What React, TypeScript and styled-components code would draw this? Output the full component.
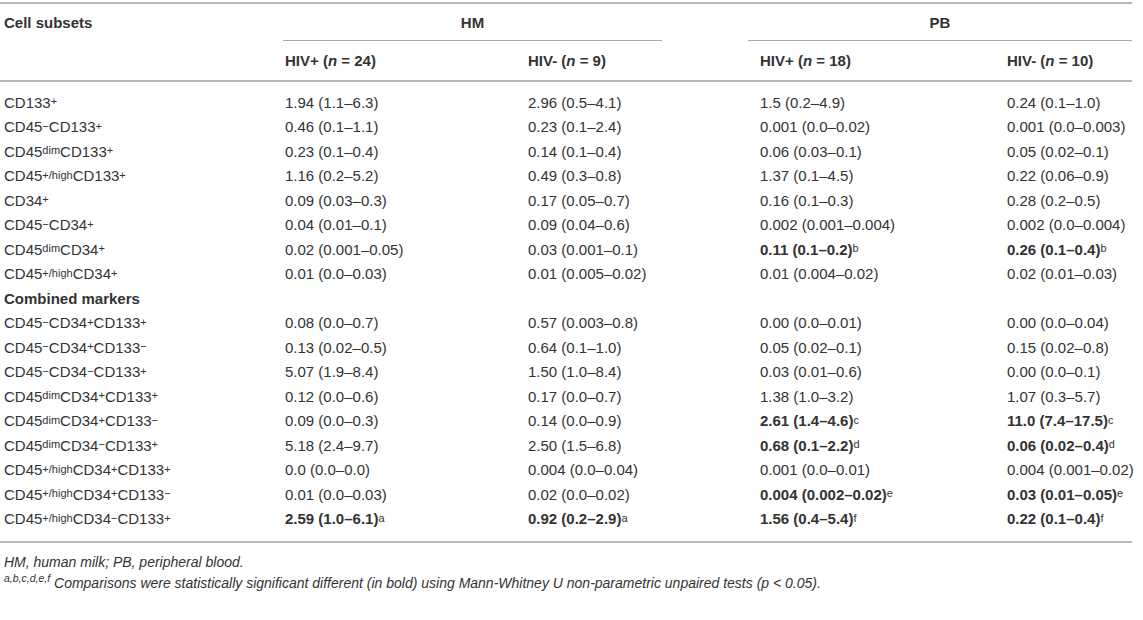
import React from "react";
import styled, { createGlobalStyle } from "styled-components";

const Global = createGlobalStyle`
  html, body { margin: 0; padding: 0; background: #fff; }
  body { font-family: "Liberation Sans", Arial, Helvetica, sans-serif; color: #333; }
`;

const Page = styled.div`
  width: 1143px;
  padding-top: 2px;
`;

const Table = styled.div`
  width: 1132px;
  display: grid;
  grid-template-columns: 283px 245px 232px 247px 125px;
  border-top: 2px solid #b8b8b8;
  font-size: 15px;
`;

const GroupLabel = styled.div<{ $span: number; $ml: number; $mr: number; $center?: boolean }>`
  grid-column: span ${(p) => p.$span};
  height: 36px;
  display: flex;
  align-items: center;
  justify-content: ${(p) => (p.$center ? "center" : "flex-start")};
  margin-left: ${(p) => p.$ml}px;
  margin-right: ${(p) => p.$mr}px;
  padding-left: ${(p) => (p.$center ? 0 : 4)}px;
  font-weight: bold;
  border-bottom: ${(p) => (p.$center ? "1px solid #aaa" : "1px solid transparent")};
`;

const SubHead = styled.div<{ $pl?: number }>`
  height: 39px;
  display: flex;
  align-items: center;
  padding-left: ${(p) => p.$pl ?? 0}px;
  font-weight: bold;
  white-space: nowrap;
  border-bottom: 2px solid #b8b8b8;
`;

const Body = styled.div`
  grid-column: 1 / -1;
  display: grid;
  grid-template-columns: 283px 245px 232px 247px 125px;
  grid-auto-rows: 24.5px;
  padding: 8px 0 10px;
  border-bottom: 2px solid #b8b8b8;
`;

const Cell = styled.div<{ $pl?: number; $bold?: boolean }>`
  display: flex;
  align-items: center;
  white-space: nowrap;
  padding-left: ${(p) => p.$pl ?? 0}px;
  font-weight: ${(p) => (p.$bold ? "bold" : "normal")};
`;

const Sup = styled.sup`
  font-size: 11px;
  line-height: 0;
  position: relative;
  top: -1px;
  vertical-align: super;
  font-weight: normal;
`;

const Notes = styled.div`
  padding: 9px 0 0 4px;
  font-size: 14px;
  font-style: italic;
  line-height: 21px;
`;

const NoteSup = styled.sup`
  font-size: 10.5px;
  line-height: 0;
`;

type Seg = [string, "n" | "p" | "m" | "s"];

const Label = ({ segs }: { segs: Seg[] }) => (
  <>
    {segs.map(([t, k], i) =>
      k === "n" ? <React.Fragment key={i}>{t}</React.Fragment> : <Sup key={i}>{k === "p" ? "+" : k === "m" ? "−" : t}</Sup>
    )}
  </>
);

const parse = (s: string): Seg[] => {
  const out: Seg[] = [];
  const re = /\{([^}]*)\}/g;
  let last = 0;
  let m: RegExpExecArray | null;
  while ((m = re.exec(s))) {
    if (m.index > last) out.push([s.slice(last, m.index), "n"]);
    const v = m[1];
    out.push([v, v === "+" ? "p" : v === "-" ? "m" : "s"]);
    last = re.lastIndex;
  }
  if (last < s.length) out.push([s.slice(last), "n"]);
  return out;
};

type Val = string | [string, string];
type Row = { label: string; vals: Val[]; section?: boolean };

const rows: Row[] = [
  { label: "CD133{+}", vals: ["1.94 (1.1–6.3)", "2.96 (0.5–4.1)", "1.5 (0.2–4.9)", "0.24 (0.1–1.0)"] },
  { label: "CD45{-}CD133{+}", vals: ["0.46 (0.1–1.1)", "0.23 (0.1–2.4)", "0.001 (0.0–0.02)", "0.001 (0.0–0.003)"] },
  { label: "CD45{dim}CD133{+}", vals: ["0.23 (0.1–0.4)", "0.14 (0.1–0.4)", "0.06 (0.03–0.1)", "0.05 (0.02–0.1)"] },
  { label: "CD45{+/high}CD133{+}", vals: ["1.16 (0.2–5.2)", "0.49 (0.3–0.8)", "1.37 (0.1–4.5)", "0.22 (0.06–0.9)"] },
  { label: "CD34{+}", vals: ["0.09 (0.03–0.3)", "0.17 (0.05–0.7)", "0.16 (0.1–0.3)", "0.28 (0.2–0.5)"] },
  { label: "CD45{-}CD34{+}", vals: ["0.04 (0.01–0.1)", "0.09 (0.04–0.6)", "0.002 (0.001–0.004)", "0.002 (0.0–0.004)"] },
  { label: "CD45{dim}CD34{+}", vals: ["0.02 (0.001–0.05)", "0.03 (0.001–0.1)", ["0.11 (0.1–0.2)", "b"], ["0.26 (0.1–0.4)", "b"]] },
  { label: "CD45{+/high}CD34{+}", vals: ["0.01 (0.0–0.03)", "0.01 (0.005–0.02)", "0.01 (0.004–0.02)", "0.02 (0.01–0.03)"] },
  { label: "Combined markers", vals: [], section: true },
  { label: "CD45{-}CD34{+}CD133{+}", vals: ["0.08 (0.0–0.7)", "0.57 (0.003–0.8)", "0.00 (0.0–0.01)", "0.00 (0.0–0.04)"] },
  { label: "CD45{-}CD34{+}CD133{-}", vals: ["0.13 (0.02–0.5)", "0.64 (0.1–1.0)", "0.05 (0.02–0.1)", "0.15 (0.02–0.8)"] },
  { label: "CD45{-}CD34{-}CD133{+}", vals: ["5.07 (1.9–8.4)", "1.50 (1.0–8.4)", "0.03 (0.01–0.6)", "0.00 (0.0–0.1)"] },
  { label: "CD45{dim}CD34{+}CD133{+}", vals: ["0.12 (0.0–0.6)", "0.17 (0.0–0.7)", "1.38 (1.0–3.2)", "1.07 (0.3–5.7)"] },
  { label: "CD45{dim}CD34{+}CD133{-}", vals: ["0.09 (0.0–0.3)", "0.14 (0.0–0.9)", ["2.61 (1.4–4.6)", "c"], ["11.0 (7.4–17.5)", "c"]] },
  { label: "CD45{dim}CD34{-}CD133{+}", vals: ["5.18 (2.4–9.7)", "2.50 (1.5–6.8)", ["0.68 (0.1–2.2)", "d"], ["0.06 (0.02–0.4)", "d"]] },
  { label: "CD45{+/high}CD34{+}CD133{+}", vals: ["0.0 (0.0–0.0)", "0.004 (0.0–0.04)", "0.001 (0.0–0.01)", "0.004 (0.001–0.02)"] },
  { label: "CD45{+/high}CD34{+}CD133{-}", vals: ["0.01 (0.0–0.03)", "0.02 (0.0–0.02)", ["0.004 (0.002–0.02)", "e"], ["0.03 (0.01–0.05)", "e"]] },
  { label: "CD45{+/high}CD34{-}CD133{+}", vals: [["2.59 (1.0–6.1)", "a"], ["0.92 (0.2–2.9)", "a"], ["1.56 (0.4–5.4)", "f"], ["0.22 (0.1–0.4)", "f"]] },
];

const colPad = [4, 2, 0, 0, 0];

export default function App() {
  return (
    <Page>
      <Global />
      <Table>
        <GroupLabel $span={1} $ml={0} $mr={0}>Cell subsets</GroupLabel>
        <GroupLabel $span={2} $ml={0} $mr={98} $center>HM</GroupLabel>
        <GroupLabel $span={2} $ml={-12} $mr={0} $center>PB</GroupLabel>
        <SubHead />
        <SubHead $pl={colPad[1]}>HIV+ (<i>n</i>&nbsp;=&nbsp;24)</SubHead>
        <SubHead>HIV- (<i>n</i>&nbsp;=&nbsp;9)</SubHead>
        <SubHead>HIV+ (<i>n</i>&nbsp;=&nbsp;18)</SubHead>
        <SubHead>HIV- (<i>n</i>&nbsp;=&nbsp;10)</SubHead>
        <Body>
          {rows.map((r, ri) => (
            <React.Fragment key={ri}>
              <Cell $pl={colPad[0]} $bold={r.section}>
                {r.section ? r.label : <Label segs={parse(r.label)} />}
              </Cell>
              {[0, 1, 2, 3].map((ci) => {
                const v = r.vals[ci];
                if (v === undefined) return <Cell key={ci} />;
                if (typeof v === "string") return <Cell key={ci} $pl={colPad[ci + 1]}>{v}</Cell>;
                return (
                  <Cell key={ci} $pl={colPad[ci + 1]} $bold>
                    {v[0]}
                    <Sup>{v[1]}</Sup>
                  </Cell>
                );
              })}
            </React.Fragment>
          ))}
        </Body>
      </Table>
      <Notes>
        <div>HM, human milk; PB, peripheral blood.</div>
        <div>
          <NoteSup>a,b,c,d,e,f</NoteSup> Comparisons were statistically significant different (in bold) using Mann-Whitney U non-parametric unpaired tests (p &lt; 0.05).
        </div>
      </Notes>
    </Page>
  );
}
